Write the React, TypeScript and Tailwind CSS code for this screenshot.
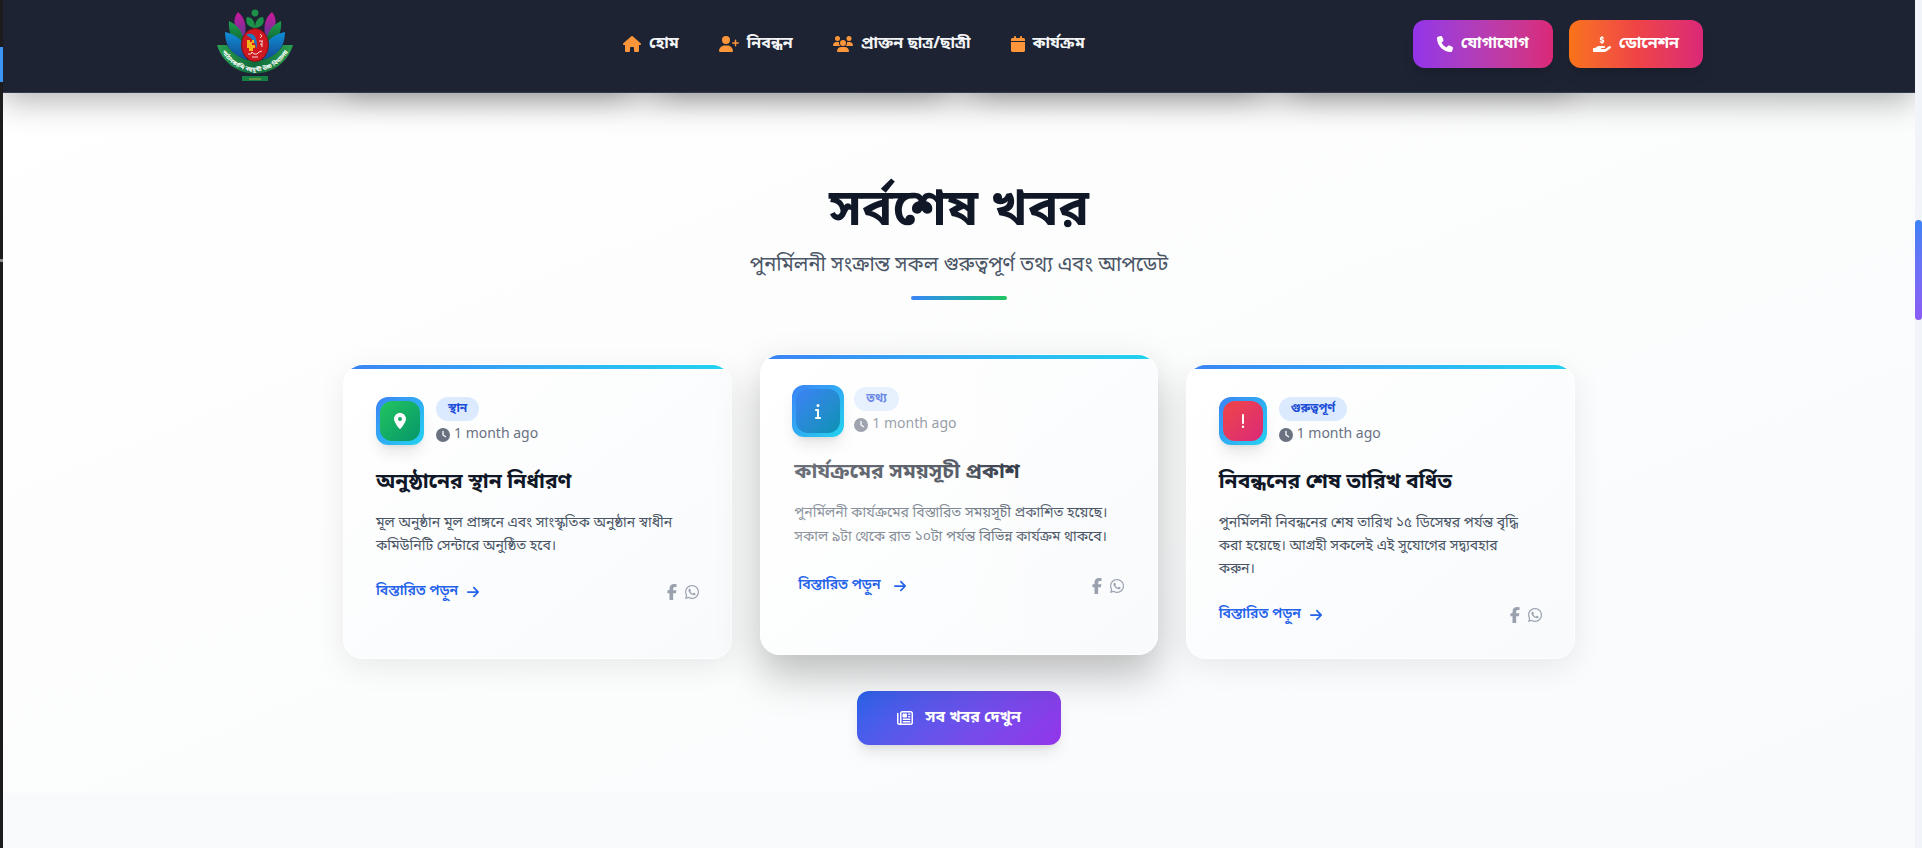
import React from 'react';
import {
  FaArrowRight,
  FaCalendar,
  FaClock,
  FaExclamation,
  FaFacebookF,
  FaHandHoldingDollar,
  FaHouse,
  FaInfo,
  FaLocationDot,
  FaPhone,
  FaRegNewspaper,
  FaUserPlus,
  FaUsers,
  FaWhatsapp,
} from 'react-icons/fa6';
import type { IconType } from 'react-icons';

type NewsItem = {
  title: string;
  tag: string;
  text: string;
  time: string;
  icon: IconType;
  iconClass: string;
  active?: boolean;
};

const navLinks: { label: string; icon: IconType; width: string }[] = [
  { label: 'হোম', icon: FaHouse, width: 'w-[18px]' },
  { label: 'নিবন্ধন', icon: FaUserPlus, width: 'w-5' },
  { label: 'প্রাক্তন ছাত্র/ছাত্রী', icon: FaUsers, width: 'w-5' },
  { label: 'কার্যক্রম', icon: FaCalendar, width: 'w-[14px]' },
];

const news: NewsItem[] = [
  {
    title: 'অনুষ্ঠানের স্থান নির্ধারণ',
    tag: 'স্থান',
    text: 'মূল অনুষ্ঠান মূল প্রাঙ্গনে এবং সাংস্কৃতিক অনুষ্ঠান স্বাধীন কমিউনিটি সেন্টারে অনুষ্ঠিত হবে।',
    time: '1 month ago',
    icon: FaLocationDot,
    iconClass: 'from-[#22c55e] to-[#059669]',
  },
  {
    title: 'কার্যক্রমের সময়সূচী প্রকাশ',
    tag: 'তথ্য',
    text: 'পুনর্মিলনী কার্যক্রমের বিস্তারিত সময়সূচী প্রকাশিত হয়েছে। সকাল ৯টা থেকে রাত ১০টা পর্যন্ত বিভিন্ন কার্যক্রম থাকবে।',
    time: '1 month ago',
    icon: FaInfo,
    iconClass: 'from-[#3b82f6] to-[#0891b2]',
    active: true,
  },
  {
    title: 'নিবন্ধনের শেষ তারিখ বর্ধিত',
    tag: 'গুরুত্বপূর্ণ',
    text: 'পুনর্মিলনী নিবন্ধনের শেষ তারিখ ১৫ ডিসেম্বর পর্যন্ত বৃদ্ধি করা হয়েছে। আগ্রহী সকলেই এই সুযোগের সদ্ব্যবহার করুন।',
    time: '1 month ago',
    icon: FaExclamation,
    iconClass: 'from-[#ef4444] to-[#db2777]',
  },
];

const Logo: React.FC = () => (
  <svg viewBox="0 0 80 80" className="size-20" role="img" aria-label="Logo">
    <defs>
      <linearGradient id="petalPink" x1="0" y1="0" x2="0" y2="1">
        <stop offset="0" stopColor="#d0179b" />
        <stop offset="1" stopColor="#5b3a96" />
      </linearGradient>
      <linearGradient id="petalGreen" x1="0" y1="0" x2="0" y2="1">
        <stop offset="0" stopColor="#1fa04b" />
        <stop offset="1" stopColor="#0b5a33" />
      </linearGradient>
      <linearGradient id="petalBlue" x1="0" y1="0" x2="0" y2="1">
        <stop offset="0" stopColor="#0f8fd6" />
        <stop offset="1" stopColor="#134a92" />
      </linearGradient>
      <linearGradient id="ribbon" x1="0" y1="0" x2="1" y2="0">
        <stop offset="0" stopColor="#2c9f50" />
        <stop offset="0.5" stopColor="#0d6a3a" />
        <stop offset="1" stopColor="#2c9f50" />
      </linearGradient>
      <path id="ribbonCurve" d="M7 48C23 74 57 74 73 48" />
    </defs>
    <path d="M23 8C17 15 18 26 29 34C32 24 31 15 23 8Z" fill="url(#petalPink)" />
    <path d="M14 17C13 28 17 38 28 42C30 30 24 22 14 17Z" fill="url(#petalGreen)" />
    <path d="M10 28C10 42 17 52 32 56C34 42 25 31 10 28Z" fill="url(#petalBlue)" />
    <path d="M57 8C63 15 62 26 51 34C48 24 49 15 57 8Z" fill="url(#petalPink)" />
    <path d="M66 17C67 28 63 38 52 42C50 30 56 22 66 17Z" fill="url(#petalGreen)" />
    <path d="M70 28C70 42 63 52 48 56C46 42 55 31 70 28Z" fill="url(#petalBlue)" />
    <g fill="#1d9147">
      <circle cx="40" cy="9" r="3.4" />
      <path d="M40 24C32 23 30 18 32 13C37 13 40 17 40 24Z" />
      <path d="M40 24C48 23 50 18 48 13C43 13 40 17 40 24Z" />
    </g>
    <path d="M2 41H12C24 62 56 62 68 41H78C66 79 14 79 2 41Z" fill="url(#ribbon)" />
    <ellipse cx="40" cy="41" rx="13.5" ry="16.5" fill="#cf1820" stroke="#7d1015" />
    <path d="M31 31C38 27 43 33 42 45C40 38 37 34 31 31Z" fill="#1b7cc0" />
    <path d="M32 36h3v2h2v-2h2v3h-2v2h3v3h-2v3h-4v-3h-2z" fill="#f4b51c" />
    <path
      d="M45 30l2 2-2 2M44 37h4M47 37v6M45 40l2 1M33 50h3l1-2 2 2h3l2-2 3-1M37 53h6"
      stroke="#f3d9d4"
      strokeWidth="1"
      fill="none"
    />
    <text fontSize="6" fontWeight="700" fill="#fff" textAnchor="middle">
      <textPath href="#ribbonCurve" startOffset="50%">
        পাঠানকান্দি বহুমুখী উচ্চ বিদ্যালয়
      </textPath>
    </text>
    <path d="M27 72h26v5H27z" fill="#168044" />
    <path d="M34 75h12" stroke="#a5a83c" />
  </svg>
);

const Header: React.FC = () => (
  <header className="relative z-10 border-b border-[#343c4b] bg-[#1d2333] shadow-[0_8px_32px_rgba(0,0,0,0.3)]">
    <div className="mx-auto flex h-[92px] max-w-[1536px] items-center justify-between px-6 pb-1">
      <a href="#home">
        <Logo />
      </a>
      <nav className="flex gap-2">
        {navLinks.map(({ label, icon: Icon, width }) => (
          <a key={label} href="#" className="flex items-center gap-2 px-4 py-2 font-bold text-gray-100">
            <Icon className={`h-4 text-[#fd953a] ${width}`} />
            {label}
          </a>
        ))}
      </nav>
      <div className="flex gap-4">
        <button
          type="button"
          className="flex h-12 items-center gap-2 rounded-xl bg-linear-to-r from-[#9333ea] to-[#db2777] px-6 font-bold text-white shadow-lg"
        >
          <FaPhone />
          যোগাযোগ
        </button>
        <button
          type="button"
          className="flex h-12 items-center gap-2 rounded-xl bg-linear-to-r from-[#f97316] via-[#ef4444] to-[#db2777] px-6 font-bold text-white shadow-lg"
        >
          <FaHandHoldingDollar className="h-4 w-[18px]" />
          ডোনেশন
        </button>
      </div>
    </div>
  </header>
);

const NewsCard: React.FC<{ item: NewsItem }> = ({ item }) => {
  const Icon = item.icon;
  return (
    <article
      className={`relative flex flex-col overflow-hidden rounded-[20px] border border-white bg-linear-to-br from-white to-slate-50 pt-8 pb-[31px] ${
        item.active
          ? '-mx-1 -mt-[10px] mb-1 px-[33px] shadow-[0_20px_40px_rgba(0,0,0,0.25)]'
          : 'px-8 shadow-[0_8px_30px_rgba(0,0,0,0.08)]'
      }`}
    >
      <div className="absolute inset-x-0 top-0 z-20 h-1 bg-linear-to-r from-[#3b82f6] to-[#22d3ee]" />
      {/* Light sweep over the highlighted card */}
      {item.active && (
        <div className="pointer-events-none absolute inset-0 z-10 bg-linear-to-r from-white/40 via-white/30 to-transparent to-80%" />
      )}
      <div className="mb-6 flex items-center gap-3">
        <div
          className={`z-20 flex items-center justify-center rounded-xl bg-linear-to-br from-[#3b82f6] to-[#22d3ee] shadow-lg ${
            item.active ? '-m-0.5 size-[52px]' : 'size-12'
          }`}
        >
          <div
            className={`flex items-center justify-center rounded-xl bg-linear-to-br text-white ${item.iconClass} ${
              item.active ? 'size-11' : 'size-10'
            }`}
          >
            <Icon />
          </div>
        </div>
        <div className="flex flex-col items-start gap-1">
          <span className="rounded-full bg-blue-100 px-3 py-1 text-xs font-bold text-[#1d4ed8]">{item.tag}</span>
          <span className="flex items-center gap-1 text-sm text-gray-500">
            <FaClock />
            {item.time}
          </span>
        </div>
      </div>
      <h3 className="mb-[15px] text-[21px] leading-7 font-bold text-gray-900">{item.title}</h3>
      <p className={`pr-2 text-sm text-gray-600 ${item.active ? 'mb-6 leading-6' : 'mb-[22px] leading-[23px]'}`}>
        {item.text}
      </p>
      <div className="z-20 flex h-6 items-center justify-between">
        <a
          href="#"
          className={`flex items-center text-sm font-semibold text-[#2563eb] ${item.active ? 'gap-3 pl-1' : 'gap-2'}`}
        >
          বিস্তারিত পড়ুন
          <FaArrowRight />
        </a>
        <div className="flex gap-2 text-gray-400">
          <button type="button" aria-label="Facebook">
            <FaFacebookF className="h-4 w-[10px]" />
          </button>
          <button type="button" aria-label="WhatsApp">
            <FaWhatsapp className="h-4 w-[14px]" />
          </button>
        </div>
      </div>
    </article>
  );
};

const App: React.FC = () => {
  return (
    <div className="flex min-h-screen bg-slate-50 font-['Noto_Sans_Bengali','Noto_Sans',sans-serif]">
      <div className="z-20 flex w-[3px] flex-col bg-[#1c1c1c]">
        <div className="mt-[47px] h-[35px] bg-[#3b96f7]" />
        <div className="mt-[177px] h-[3px] bg-[#8a8a8a]" />
      </div>
      <div className="min-w-0 flex-1">
        <Header />
        <section className="bg-linear-to-br from-white to-gray-50 pb-12">
          <div className="mx-auto max-w-7xl px-6">
            {/* Lower edge of the stat cards tucked under the header */}
            <div className="-mt-20 grid grid-cols-4 gap-8">
              <div className="h-20 shadow-[0_8px_28px_-4px_rgba(0,0,0,0.2)]" />
              <div className="h-20 shadow-[0_8px_28px_-4px_rgba(0,0,0,0.2)]" />
              <div className="h-20 shadow-[0_8px_28px_-4px_rgba(0,0,0,0.2)]" />
              <div className="h-20 shadow-[0_8px_28px_-4px_rgba(0,0,0,0.2)]" />
            </div>
            <div className="flex flex-col items-center pt-[95px] pb-16">
              <h2 className="mb-4 text-[51px] leading-12 font-bold text-gray-900">সর্বশেষ খবর</h2>
              <p className="mb-4 text-xl text-gray-600">পুনর্মিলনী সংক্রান্ত সকল গুরুত্বপূর্ণ তথ্য এবং আপডেট</p>
              <div className="h-1 w-24 rounded-full bg-linear-to-r from-[#3b82f6] to-[#22c55e]" />
            </div>
            <div className="grid grid-cols-3 gap-8">
              {news.map(item => (
                <NewsCard key={item.title} item={item} />
              ))}
            </div>
            <div className="mt-8 flex justify-center">
              <button
                type="button"
                className="flex items-center gap-3 rounded-xl bg-linear-135 from-[#2563eb] to-[#9333ea] px-10 py-[15px] font-bold text-white shadow-lg"
              >
                <FaRegNewspaper />
                সব খবর দেখুন
              </button>
            </div>
          </div>
        </section>
      </div>
      <div className="z-20 w-[7px] bg-slate-100 pt-[220px]">
        <div className="h-[100px] rounded-full bg-linear-to-b from-[#3b82f6] to-[#8b5cf6]" />
      </div>
    </div>
  );
};

export default App;
